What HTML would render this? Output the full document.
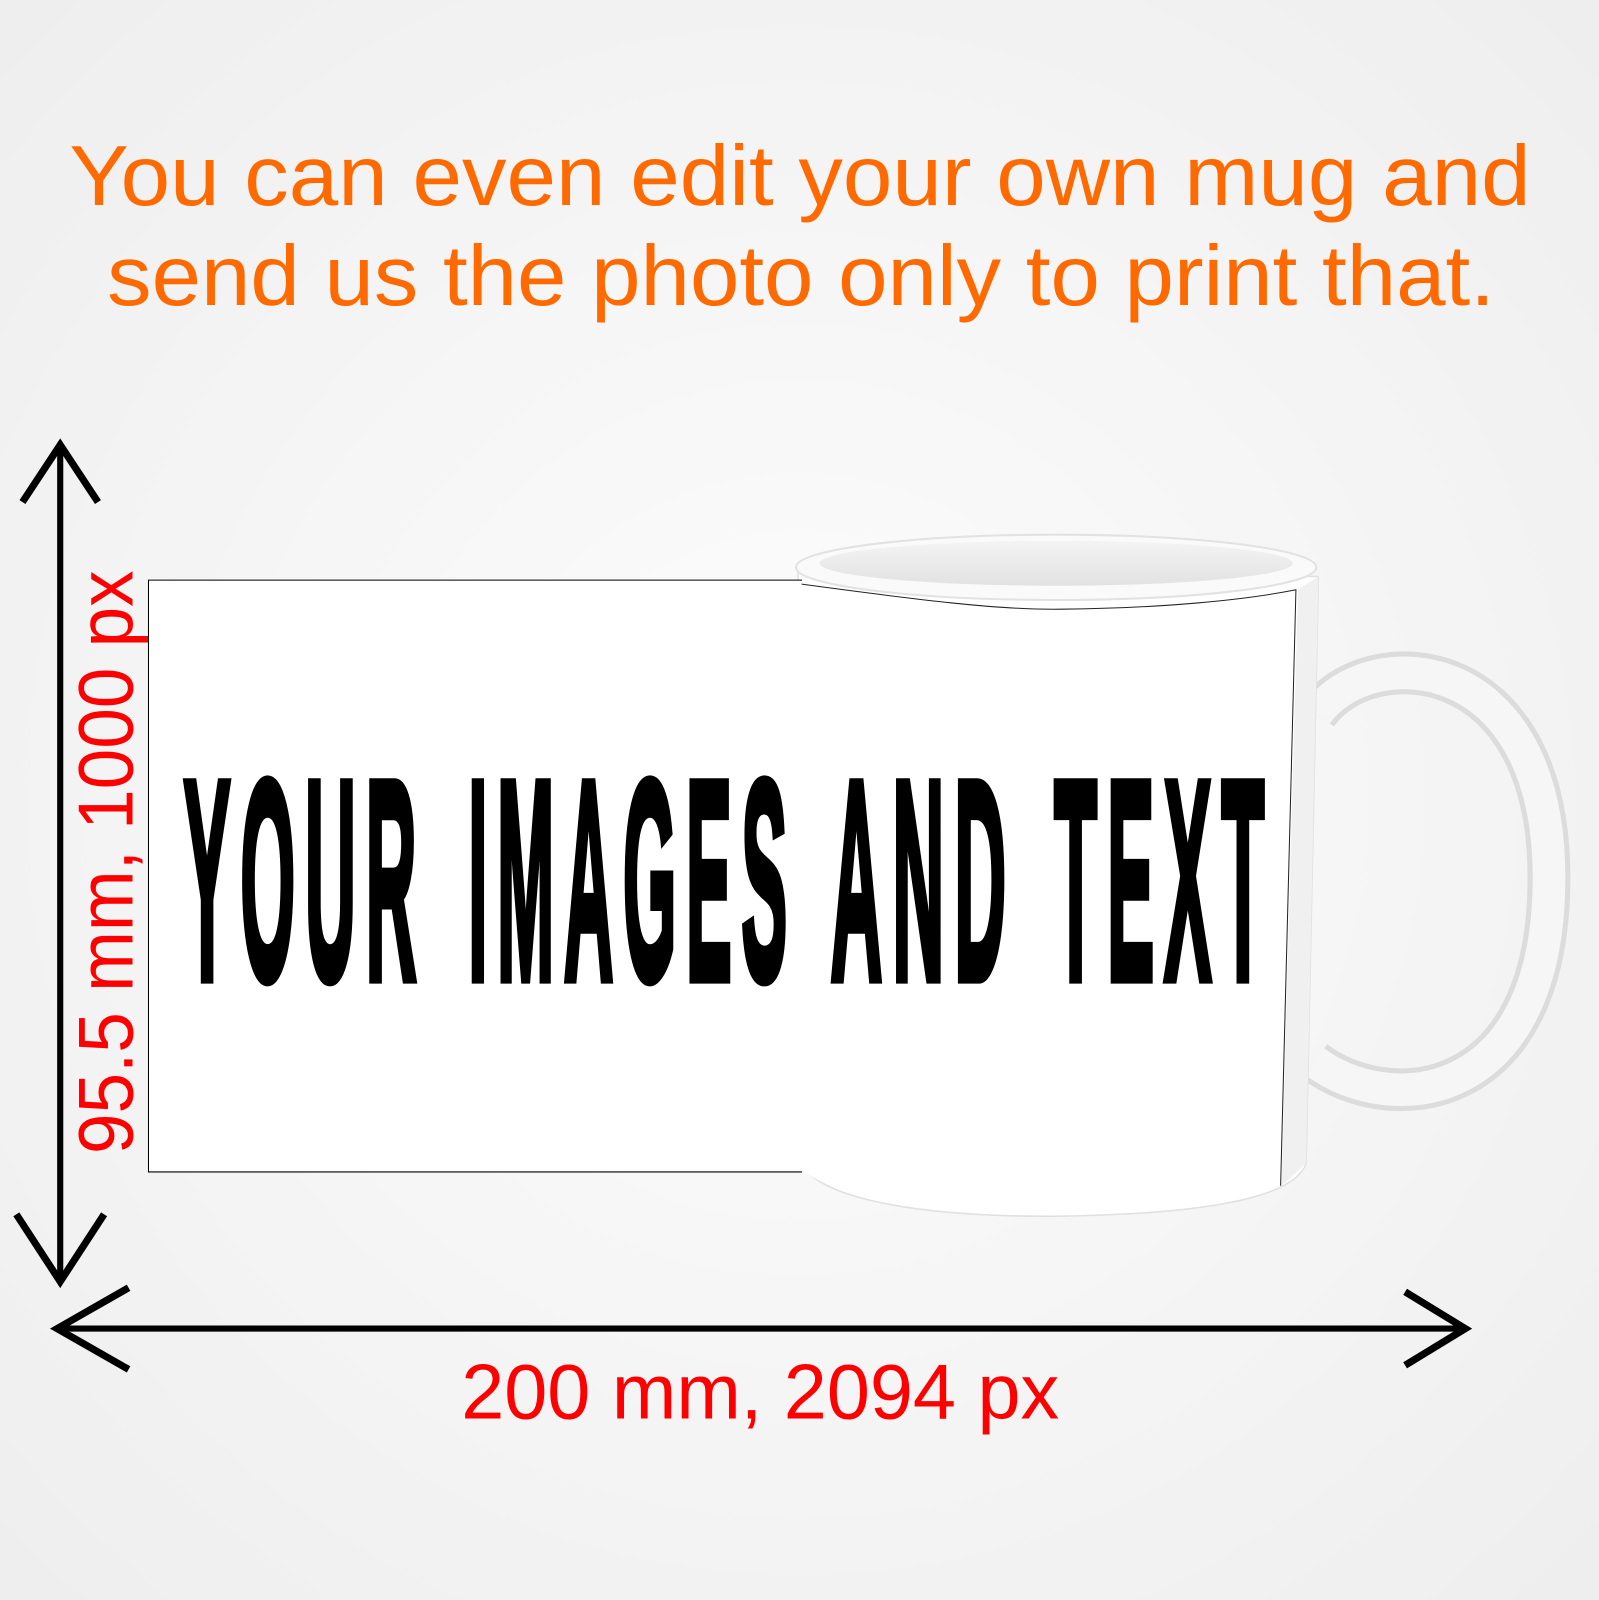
<!DOCTYPE html>
<html><head><meta charset="utf-8"><style>
html,body{margin:0;padding:0;width:1599px;height:1600px;overflow:hidden;background:#f3f3f3}
svg{display:block}
</style></head><body>
<svg width="1599" height="1600" viewBox="0 0 1567 1568" xmlns="http://www.w3.org/2000/svg">
<defs>
<radialGradient id="bg" cx="0.5" cy="0.5" r="0.7">
<stop offset="0" stop-color="#fdfdfd"/><stop offset="1" stop-color="#eeeeee"/>
</radialGradient>
<linearGradient id="inner" x1="0" y1="0" x2="0" y2="1">
<stop offset="0" stop-color="#f4f4f4"/><stop offset="1" stop-color="#e2e2e2"/>
</linearGradient>
</defs>
<rect width="1567" height="1568" fill="url(#bg)"/>
<g font-family="Liberation Sans, Arial, sans-serif" fill="#ff6a00" font-size="84" text-anchor="middle">
<text x="784" y="201" textLength="1432" lengthAdjust="spacingAndGlyphs">You can even edit your own mug and</text>
<text x="785" y="299" textLength="1360" lengthAdjust="spacingAndGlyphs">send us the photo only to print that.</text>
</g>
<g stroke="#000" fill="none" stroke-width="6">
<line x1="59" y1="436" x2="59" y2="1256"/>
<polyline points="22,492 59,436 96,492" stroke-width="7"/>
<polyline points="16,1190 59,1256 102,1190" stroke-width="7"/>
<line x1="56" y1="1302" x2="1436" y2="1302"/>
<polyline points="126,1262 56,1302 126,1342" stroke-width="7"/>
<polyline points="1377,1266 1436,1302 1377,1338" stroke-width="7"/>
</g>
<g font-family="Liberation Sans, Arial, sans-serif" fill="#ff0000" font-size="76">
<text x="745" y="1390" text-anchor="middle" textLength="586" lengthAdjust="spacingAndGlyphs">200 mm, 2094 px</text>
<text transform="translate(130,845) rotate(-90)" text-anchor="middle" textLength="572" lengthAdjust="spacingAndGlyphs">95.5 mm, 1000 px</text>
</g>
<path d="M1290,700 C1340,628 1518,635 1518,860 C1518,1085 1360,1095 1288,1040" fill="none" stroke="#dcdcdc" stroke-width="42"/>
<path d="M1290,700 C1340,628 1518,635 1518,860 C1518,1085 1360,1095 1288,1040" fill="none" stroke="#f6f6f6" stroke-width="32"/>
<path d="M782,560 L1292,565 L1280,1140 C1270,1170 1200,1190 1030,1192 C880,1192 800,1170 785,1140 Z" fill="#ffffff" stroke="#e0e0e0" stroke-width="1.5"/>
<path d="M1272,578 L1292,565 L1280,1140 L1256,1162 Z" fill="#f0f0f0"/>
<ellipse cx="1035" cy="556" rx="255" ry="32" fill="#fafafa" stroke="#e2e2e2" stroke-width="2"/>
<ellipse cx="1035" cy="552" rx="232" ry="22" fill="url(#inner)"/>
<path d="M782,572 C900,588 980,598 1040,597 C1140,596 1220,588 1270,578 L1255,1162 C1200,1182 1100,1190 1030,1190 C900,1190 810,1170 785,1145 Z" fill="#ffffff"/>
<path d="M782,572 C900,588 980,598 1040,597 C1140,596 1220,588 1270,578 L1255,1162" fill="none" stroke="#222" stroke-width="1"/>
<rect x="145.5" y="568.5" width="640" height="580" fill="#ffffff"/>
<path d="M786,568.5 H145.5 V1148.5 H786" fill="none" stroke="#000" stroke-width="1"/>
<g font-family="Liberation Sans, Arial, sans-serif" font-weight="bold" font-size="278" fill="#000" stroke="#000" stroke-width="10" letter-spacing="40">
<text x="180" y="959" textLength="238" lengthAdjust="spacingAndGlyphs">YOUR</text>
<text x="459" y="959" textLength="322" lengthAdjust="spacingAndGlyphs">IMAGES</text>
<text x="814" y="959" textLength="182" lengthAdjust="spacingAndGlyphs">AND</text>
<text x="1033" y="959" textLength="216" lengthAdjust="spacingAndGlyphs">TEXT</text>
</g>
</svg>
</body></html>
